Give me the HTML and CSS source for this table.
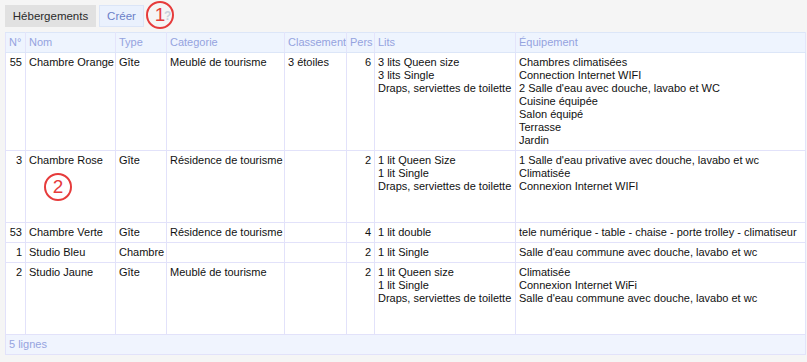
FILE: index.html
```html
<!DOCTYPE html>
<html lang="fr">
<head>
<meta charset="utf-8">
<title>Hébergements</title>
<link rel="stylesheet" href="styles.css">
</head>
<body>
<div class="page">
  <div class="toolbar">
    <button class="btn btn-tab">Hébergements</button>
    <button class="btn btn-create">Créer</button>
    <span class="help">?</span>
    <span class="marker marker-1">1</span>
  </div>
  <table class="grid">
    <colgroup>
      <col class="c-num"><col class="c-nom"><col class="c-type"><col class="c-cat"><col class="c-cls"><col class="c-pers"><col class="c-lits"><col class="c-eq">
    </colgroup>
    <thead>
      <tr>
        <th>N°</th><th>Nom</th><th>Type</th><th>Categorie</th><th>Classement</th><th>Pers</th><th>Lits</th><th>Équipement</th>
      </tr>
    </thead>
    <tbody>
      <tr>
        <td class="num">55</td><td>Chambre Orange</td><td>Gîte</td><td>Meublé de tourisme</td><td>3 étoiles</td><td class="num">6</td>
        <td>3 lits Queen size<br>3 lits Single<br>Draps, serviettes de toilette</td>
        <td>Chambres climatisées<br>Connection Internet WIFI<br>2 Salle d'eau avec douche, lavabo et WC<br>Cuisine équipée<br>Salon équipé<br>Terrasse<br>Jardin</td>
      </tr>
      <tr>
        <td class="num">3</td><td class="rel">Chambre Rose<span class="marker marker-2">2</span></td><td>Gîte</td><td>Résidence de tourisme</td><td></td><td class="num">2</td>
        <td>1 lit Queen Size<br>1 lit Single<br>Draps, serviettes de toilette<br>&nbsp;<br>&nbsp;</td>
        <td>1 Salle d'eau privative avec douche, lavabo et wc<br>Climatisée<br>Connexion Internet WIFI</td>
      </tr>
      <tr>
        <td class="num">53</td><td>Chambre Verte</td><td>Gîte</td><td>Résidence de tourisme</td><td></td><td class="num">4</td>
        <td>1 lit double</td>
        <td>tele numérique - table - chaise - porte trolley - climatiseur</td>
      </tr>
      <tr>
        <td class="num">1</td><td>Studio Bleu</td><td>Chambre</td><td></td><td></td><td class="num">2</td>
        <td>1 lit Single</td>
        <td>Salle d'eau commune avec douche, lavabo et wc</td>
      </tr>
      <tr>
        <td class="num">2</td><td>Studio Jaune</td><td>Gîte</td><td>Meublé de tourisme</td><td></td><td class="num">2</td>
        <td>1 lit Queen size<br>1 lit Single<br>Draps, serviettes de toilette<br>&nbsp;<br>&nbsp;</td>
        <td>Climatisée<br>Connexion Internet WiFi<br>Salle d'eau commune avec douche, lavabo et wc</td>
      </tr>
    </tbody>
    <tfoot>
      <tr><td colspan="8">5 lignes</td></tr>
    </tfoot>
  </table>
</div>
</body>
</html>
```

FILE: styles.css
```css
html, body {
  margin: 0;
  padding: 0;
  background: #f5f5f5;
}
body {
  font-family: "Liberation Sans", Arial, sans-serif;
  font-size: 11px;
  line-height: 13px;
  color: #111;
}
.page {
  padding: 5px 0 0 5px;
}
.toolbar {
  position: relative;
  display: flex;
  align-items: center;
  gap: 3px;
  height: 22px;
  margin-bottom: 5px;
}
.btn {
  font-family: inherit;
  font-size: 11.5px;
  height: 22px;
  padding: 0 6px;
  border: 1px solid transparent;
  border-radius: 0;
  cursor: pointer;
}
.btn-tab {
  width: 91px;
  background: #e1e1e1;
  color: #2a2a2a;
  border-color: #e1e1e1;
}
.btn-create {
  width: 45px;
  background: #eaf1fd;
  color: #6a7fc8;
  border-color: #dbe5f7;
}
.help {
  margin-left: 17px;
  font-size: 12px;
  font-weight: bold;
  color: #c9cfdc;
}
.marker {
  position: absolute;
  width: 24px;
  height: 24px;
  border: 2px solid #e63b3b;
  border-radius: 50%;
  color: #e63b3b;
  font-family: "Liberation Sans", Arial, sans-serif;
  font-size: 19px;
  line-height: 24px;
  text-align: center;
}
.marker-1 {
  left: 141px;
  top: -4px;
}
.marker-2 {
  left: 18px;
  top: 22px;
}
.grid {
  width: 800px;
  border-collapse: collapse;
  table-layout: fixed;
  background: #fff;
}
.c-num { width: 20px; }
.c-nom { width: 90px; }
.c-type { width: 51px; }
.c-cat { width: 118px; }
.c-cls { width: 62px; }
.c-pers { width: 28px; }
.c-lits { width: 141px; }
.c-eq { width: 290px; }
.grid th {
  background: #eef4fe;
  color: #95a3df;
  font-weight: normal;
  text-align: left;
  padding: 3px 3px;
  border: 1px solid #dce6f8;
  border-left-color: #e4e4fb;
  border-right-color: #e4e4fb;
  white-space: nowrap;
  overflow: hidden;
}
.grid td {
  vertical-align: top;
  padding: 3px 3px;
  border: 1px solid #e2e2fa;
  white-space: nowrap;
  overflow: hidden;
}
.grid td.num {
  text-align: right;
}
.grid td.rel {
  position: relative;
  overflow: visible;
}
.grid tfoot td {
  background: #f0f4fe;
  color: #95a3df;
  border: 1px solid #e2e2fa;
}
```
